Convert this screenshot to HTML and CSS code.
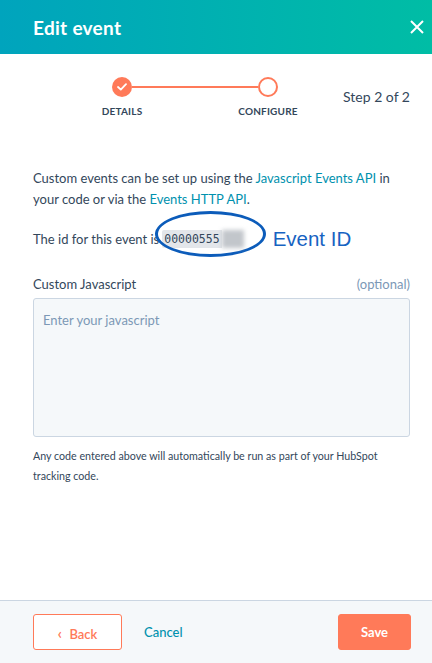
FILE: index.html
```html
<!DOCTYPE html>
<html>
<head>
<meta charset="utf-8">
<link rel="stylesheet" href="styles.css">
</head>
<body>
<div class="modal">
  <header class="header">
    <h1 class="title">Edit event</h1>
    <button class="close" aria-label="Close">
      <svg width="14" height="14" viewBox="0 0 14 14"><path d="M1 1 L13 13 M13 1 L1 13" stroke="#fff" stroke-width="2" fill="none"/></svg>
    </button>
  </header>

  <main class="main">
    <div class="stepper-row">
      <div class="steps">
        <div class="step">
          <span class="dot dot-done">
            <svg width="10" height="8" viewBox="0 0 10 8"><path d="M1 4 L3.8 6.6 L9 1.2" stroke="#fff" stroke-width="1.8" fill="none" stroke-linecap="round" stroke-linejoin="round"/></svg>
          </span>
          <span class="step-label">DETAILS</span>
        </div>
        <div class="connector"></div>
        <div class="step">
          <span class="dot dot-active"></span>
          <span class="step-label">CONFIGURE</span>
        </div>
      </div>
      <div class="step-count">Step 2 of 2</div>
    </div>

    <p class="intro">Custom events can be set up using the <span class="link">Javascript Events API</span> in your code or via the <span class="link">Events HTTP API</span>.</p>

    <div class="id-row">
      <span class="id-text">The id for this event is</span>
      <span class="id-code-wrap"><code class="id-code">00000555</code><span class="redact"></span></span>
      <span class="annot">Event ID</span>
    </div>

    <div class="field-head">
      <span class="field-label">Custom Javascript</span>
      <span class="optional">(optional)</span>
    </div>
    <div class="textarea"><span class="placeholder">Enter your javascript</span></div>
    <p class="help">Any code entered above will automatically be run as part of your HubSpot tracking code.</p>
  </main>

  <footer class="footer">
    <button class="btn btn-back"><span class="chev">‹</span> Back</button>
    <button class="btn btn-cancel">Cancel</button>
    <button class="btn btn-save">Save</button>
  </footer>
</div>
</body>
</html>
```

FILE: styles.css
```css
* { box-sizing: border-box; }
html, body { margin: 0; padding: 0; }
body {
  width: 432px;
  height: 663px;
  font-family: "Lato", "Open Sans", sans-serif;
  color: #33475b;
  background: #fff;
  overflow: hidden;
}
.modal {
  height: 663px;
  display: flex;
  flex-direction: column;
}
.header {
  height: 54px;
  flex: none;
  display: flex;
  align-items: center;
  justify-content: space-between;
  padding: 0 8px 0 33px;
  background: linear-gradient(90deg, #00a4bd 0%, #00bda5 100%);
}
.title {
  margin: 0;
  font-size: 19px;
  font-weight: 700;
  color: #fff;
  letter-spacing: 0.3px;
}
.close {
  background: none;
  border: 0;
  padding: 0;
  width: 14px;
  height: 14px;
  margin-right: 0;
  display: flex;
}
.main {
  flex: 1;
  padding: 23px 22px 0 33px;
}
.stepper-row {
  display: flex;
  align-items: flex-start;
}
.steps {
  display: flex;
  align-items: flex-start;
  margin-left: 59px;
}
.step {
  width: 60px;
  display: flex;
  flex-direction: column;
  align-items: center;
  position: relative;
  z-index: 1;
}
.dot {
  width: 20px;
  height: 20px;
  border-radius: 50%;
  display: flex;
  align-items: center;
  justify-content: center;
}
.dot-done { background: #ff7a59; }
.dot-active { background: #fff; border: 2px solid #ff7a59; }
.step-label {
  margin-top: 7px;
  font-size: 10px;
  line-height: 14px;
  font-weight: 700;
  letter-spacing: 0.2px;
  color: #33475b;
  white-space: nowrap;
}
.connector {
  width: 126px;
  height: 2px;
  margin: 9px -20px 0;
  background: #ff7a59;
}
.step-count {
  margin-left: auto;
  margin-top: 12px;
  font-size: 14px;
  line-height: 16px;
  color: #33475b;
}
.intro {
  margin: 50px 0 0;
  font-size: 13px;
  line-height: 21px;
}
.link { color: #0091ae; }
.id-row {
  margin-top: 16px;
  display: flex;
  align-items: center;
  height: 26px;
  font-size: 13px;
}
.id-code-wrap {
  position: relative;
  display: flex;
  align-items: center;
  margin-left: 3px;
}
.id-code-wrap::before {
  content: "";
  position: absolute;
  left: -7px;
  top: -19px;
  width: 105px;
  height: 40px;
  border: 3px solid #0c5cba;
  border-radius: 50%;
}
.id-code {
  font-family: "DejaVu Sans Mono", "Liberation Mono", monospace;
  font-size: 11.5px;
  line-height: 18px;
  color: #33475b;
  background: #e3e6ea;
  padding: 0 2px;
  border-radius: 2px 0 0 2px;
}
.redact {
  width: 22px;
  height: 18px;
  background: #c2c6cb;
  filter: blur(2px);
}
.annot {
  margin-left: 29px;
  font-family: "Liberation Sans", Arial, sans-serif;
  font-size: 20.5px;
  color: #1763c2;
}
.field-head {
  margin-top: 23px;
  display: flex;
  justify-content: space-between;
  align-items: baseline;
  font-size: 13px;
  line-height: 18px;
}
.optional { color: #7c98b6; }
.textarea {
  margin-top: 5px;
  height: 139px;
  background: #f5f8fa;
  border: 1px solid #cbd6e2;
  border-radius: 3px;
  padding: 10px 9px;
}
.placeholder {
  font-size: 13px;
  color: #7c98b6;
}
.help {
  margin: 9px 0 0;
  font-size: 10.7px;
  line-height: 20px;
  color: #33475b;
}
.footer {
  flex: none;
  height: 63px;
  border-top: 1px solid #cbd6e2;
  background: #f5f8fa;
  display: flex;
  align-items: center;
  padding: 0 21px 0 33px;
}
.btn {
  font-family: inherit;
  font-size: 13px;
  height: 36px;
  border-radius: 3px;
  cursor: pointer;
}
.btn-back {
  width: 89px;
  background: #fff;
  border: 1px solid #ff7a59;
  color: #ff7a59;
  font-weight: 600;
}
.chev { font-size: 16px; margin-right: 4px; }
.btn-cancel {
  margin-left: 16px;
  background: none;
  border: 0;
  color: #0091ae;
  font-weight: 500;
}
.btn-save {
  margin-left: auto;
  width: 73px;
  background: #ff7a59;
  border: 1px solid #ff7a59;
  color: #fff;
  font-weight: 700;
}
```
